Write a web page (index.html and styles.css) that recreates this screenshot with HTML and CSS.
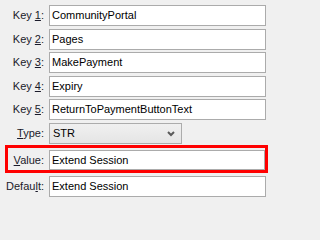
FILE: index.html
```html
<!DOCTYPE html>
<html>
<head>
<meta charset="utf-8">
<link rel="stylesheet" href="styles.css">
</head>
<body>
<div class="form">
  <div class="keys">
    <div class="row"><span class="lbl">Key <u>1</u>:</span><div class="field">CommunityPortal</div></div>
    <div class="row"><span class="lbl">Key <u>2</u>:</span><div class="field">Pages</div></div>
    <div class="row"><span class="lbl">Key <u>3</u>:</span><div class="field">MakePayment</div></div>
    <div class="row"><span class="lbl">Key <u>4</u>:</span><div class="field">Expiry</div></div>
    <div class="row"><span class="lbl">Key <u>5</u>:</span><div class="field">ReturnToPaymentButtonText</div></div>
  </div>
  <div class="row type-row"><span class="lbl"><u>T</u>ype:</span><div class="select"><span>STR</span><svg class="chev" width="8" height="6" viewBox="0 0 8 6"><polyline points="1,1 4,4 7,1" fill="none" stroke="#5a5a5a" stroke-width="2"/></svg></div></div>
  <div class="row hl"><span class="lbl"><u>V</u>alue:</span><div class="field">Extend Session</div></div>
  <div class="row default-row"><span class="lbl">Defau<u>l</u>t:</span><div class="field">Extend Session</div></div>
</div>
</body>
</html>
```
FILE: styles.css
```css
html, body {
  margin: 0;
  padding: 0;
  background: #f0f0f0;
}
body {
  font-family: "Liberation Sans", Arial, sans-serif;
  font-size: 11px;
  color: #000;
}
.form {
  display: flex;
  flex-direction: column;
  padding-top: 5px;
}
.keys {
  display: flex;
  flex-direction: column;
  gap: 2.5px;
}
.row {
  display: flex;
  align-items: center;
  gap: 5px;
  height: 21px;
}
.lbl {
  width: 44px;
  text-align: right;
  line-height: 21px;
  white-space: nowrap;
  color: #1a1a2a;
}
.lbl u {
  text-decoration-thickness: 1px;
  text-underline-offset: 1px;
}
.field {
  box-sizing: border-box;
  width: 217px;
  height: 21px;
  background: #fff;
  border: 1px solid #ababab;
  padding-left: 2px;
  line-height: 19px;
  white-space: nowrap;
  overflow: hidden;
}
.type-row {
  margin-top: 3px;
}
.select {
  box-sizing: border-box;
  width: 133px;
  height: 21px;
  border: 1px solid #acacac;
  background: linear-gradient(#f0f0f0, #e5e5e5);
  display: flex;
  align-items: center;
  justify-content: space-between;
  padding: 0 6px 0 3px;
  line-height: 19px;
}
.chev {
  display: block;
}
.hl {
  box-sizing: border-box;
  margin-top: 1px;
  margin-left: 5px;
  width: 263px;
  height: 28px;
  border: 3px solid #ff0000;
  padding-top: 2px;
  align-items: flex-start;
}
.hl .lbl {
  width: 36px;
  line-height: 20px;
}
.hl .field {
  width: 216px;
  height: 20px;
  line-height: 18px;
}
.default-row {
  margin-top: 3px;
}
```
